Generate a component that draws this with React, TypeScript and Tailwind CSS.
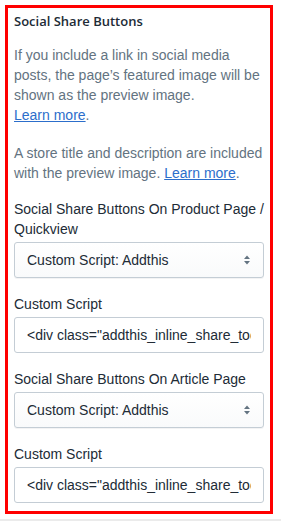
import React from "react";

function SelectArrows() {
  return (
    <svg width="8" height="12" viewBox="0 0 8 12" className="fill-[#637381]">
      <path d="M4 1.5 L7 5 H1 Z" />
      <path d="M4 10.5 L7 7 H1 Z" />
    </svg>
  );
}

function LearnMore() {
  return (
    <span className="whitespace-nowrap">
      <a href="#" className="text-[#2c6ecb] underline">
        Learn more
      </a>
      .
    </span>
  );
}

function SelectField({ label, value }: { label: string; value: string }) {
  return (
    <div className="mt-4">
      <label className="block mb-[3px] text-[#212b36]">{label}</label>
      <div className="relative">
        <select
          defaultValue={value}
          className="appearance-none w-full h-9 pl-3 pr-8 rounded-[3px] border border-[#c4cdd5] bg-gradient-to-b from-white to-[#f9fafb] shadow-[0_1px_0_0_rgba(22,29,37,0.05)] text-[#212b36] outline-none"
        >
          <option>{value}</option>
          <option>Built-in</option>
          <option>Disabled</option>
        </select>
        <span className="pointer-events-none absolute right-[13px] top-1/2 -translate-y-1/2 flex">
          <SelectArrows />
        </span>
      </div>
    </div>
  );
}

function ScriptField({ value }: { value: string }) {
  return (
    <div className="mt-4">
      <label className="block mb-[3px] text-[#212b36]">Custom Script</label>
      <input
        readOnly
        value={value}
        className="block w-full h-9 px-3 rounded-[3px] border border-[#c4cdd5] bg-white text-[#212b36] outline-none"
      />
    </div>
  );
}

const SCRIPT = '<div class="addthis_inline_share_toolbox"></div>';

export default function App() {
  return (
    <div className="w-[281px] h-[521px] bg-white flex flex-col font-['Liberation_Sans',Arial,sans-serif] text-[14px] leading-5">
      <div className="ml-[5px] mt-[5px] w-[268px] h-[509px] border-[3px] border-[#ff0000] px-[6px] pt-[3px]">
        <h2 className="font-['Open_Sans',sans-serif] text-[13px] font-semibold text-[#212b36]">
          Social Share Buttons
        </h2>

        <p className="mt-[14px] text-[#637381]">
          If you include a link in social media posts, the page’s featured
          image will be shown as the preview image. <LearnMore />
        </p>

        <p className="mt-[18px] text-[#637381]">
          A store title and description are included with the preview image.{" "}
          <LearnMore />
        </p>

        <SelectField
          label="Social Share Buttons On Product Page / Quickview"
          value="Custom Script: Addthis"
        />
        <ScriptField value={SCRIPT} />

        <SelectField
          label="Social Share Buttons On Article Page"
          value="Custom Script: Addthis"
        />
        <ScriptField value={SCRIPT} />
      </div>
      <div className="mt-auto h-[2px] bg-[#ebebeb]" />
    </div>
  );
}
